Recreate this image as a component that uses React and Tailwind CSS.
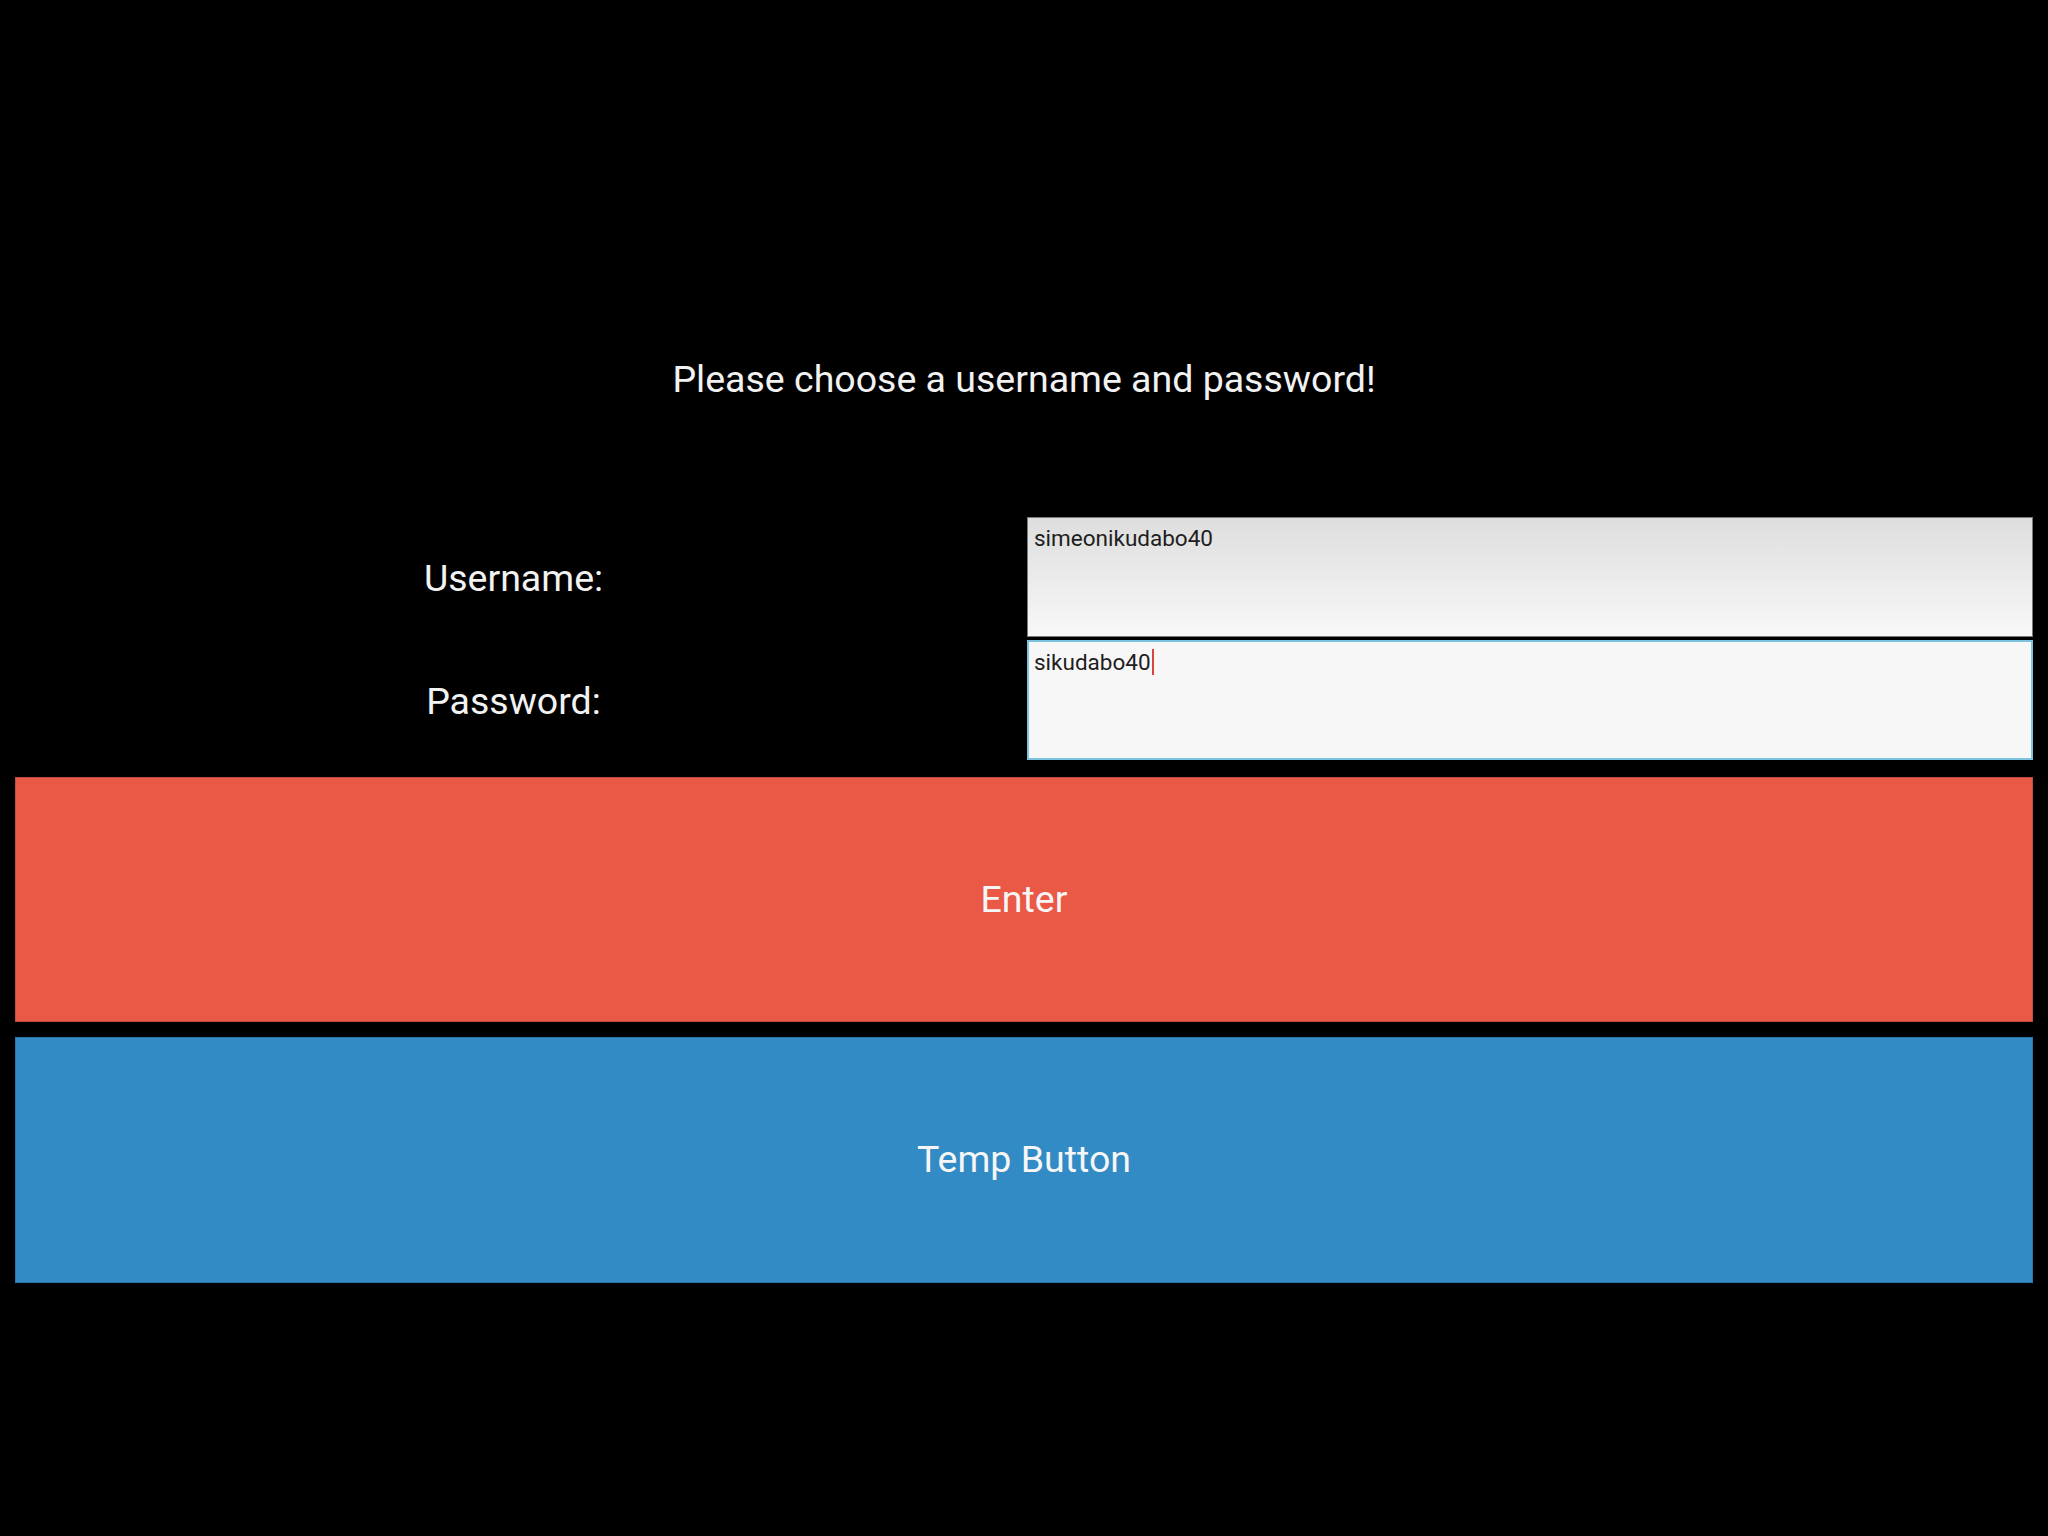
export default function App() {
  return (
    <div className="flex h-[1536px] w-full flex-col bg-black font-['Roboto','Liberation_Sans',sans-serif] text-white">
      <div className="h-[517px] pt-[341px]">
        <div className="flex h-[78px] items-center justify-center text-[37.5px] leading-none text-[#f2f2f2]">
          Please choose a username and password!
        </div>
      </div>

      <div className="grid grid-cols-[1027px_1fr] gap-y-[3px] pr-[15px]">
        <div className="flex h-[120px] items-center justify-center pt-[3px] text-[37.5px] leading-none text-[#f2f2f2]">
          Username:
        </div>
        <div className="h-[120px] border border-[#7a7a7a] bg-gradient-to-b from-[#dedede] to-[#f8f8f8] px-[6px] pt-[9px] text-[22.5px] leading-none text-[#1e1e1e]">
          simeonikudabo40
        </div>

        <div className="flex h-[120px] items-center justify-center pt-[4px] text-[37.5px] leading-none text-[#f2f2f2]">
          Password:
        </div>
        <div className="h-[120px] border-2 border-[#7cc3e2] bg-[#f7f7f7] px-[5px] pt-[7px] text-[22.5px] leading-none text-[#1e1e1e]">
          <span className="inline-flex items-center">
            sikudabo40
            <span className="ml-[1px] inline-block h-[26px] w-[2px] bg-[#d9453c]" />
          </span>
        </div>
      </div>

      <div className="mt-[17px] flex flex-col gap-[15px] px-[15px]">
        <button
          type="button"
          className="flex h-[245px] w-full items-center justify-center border border-[#c24b3f] bg-[#ea5846] text-[37.5px] leading-none text-[#f6f6f6]"
        >
          Enter
        </button>
        <button
          type="button"
          className="flex h-[246px] w-full items-center justify-center border border-[#2b77aa] bg-[#328bc4] text-[37.5px] leading-none text-[#f6f6f6]"
        >
          Temp Button
        </button>
      </div>
    </div>
  );
}
